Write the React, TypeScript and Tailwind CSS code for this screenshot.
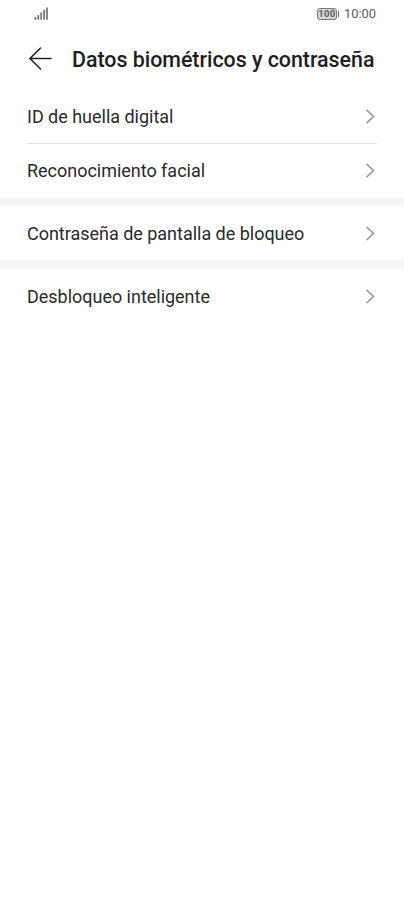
import { Fragment } from 'react';

const groups = [
  ['ID de huella digital', 'Reconocimiento facial'],
  ['Contraseña de pantalla de bloqueo'],
  ['Desbloqueo inteligente'],
];

function StatusBar() {
  return (
    <div className="flex h-7 items-center justify-between pr-7 pl-[34px]">
      {/* Signal */}
      <svg className="mb-px" width="14" height="13" viewBox="0 0 14 13" fill="#777">
        <rect x="0.5" y="10" width="1.8" height="2.7" />
        <rect x="3.4" y="8" width="1.8" height="4.7" />
        <rect x="6.3" y="5.5" width="1.8" height="7.2" />
        <rect x="9.2" y="3" width="1.8" height="9.7" />
        <rect x="12.1" y="0.5" width="1.8" height="12.2" />
      </svg>

      {/* Battery and clock */}
      <div className="flex items-center">
        <div className="flex h-3 w-5 items-center justify-center rounded-[3px] border border-[#777] bg-[#d6d6d6] text-[9.5px] leading-none font-bold tracking-[0.3px] text-[#606060]">
          100
        </div>
        <div className="ml-px h-1.5 w-px bg-[#6e6e6e]" />
        <span className="ml-[5px] text-[12.9px] leading-none text-[#5c5c5c]">10:00</span>
      </div>
    </div>
  );
}

function Row({ label }: { label: string }) {
  return (
    <button className="flex h-[54px] w-full items-center justify-between pr-[29px] pl-[27px] text-left">
      <span className="text-[18px] leading-6 tracking-[-0.02px] text-[#2a2a2a]">{label}</span>
      <svg className="mb-0.5" width="10" height="16" viewBox="0 0 10 16" fill="none" stroke="#9b9b9b" strokeWidth="1.6">
        <path d="M1.5 1.8 8.5 8.5l-7 6.7" />
      </svg>
    </button>
  );
}

export default function App() {
  return (
    <div className="min-h-screen w-full bg-white font-['Roboto',sans-serif]">
      <StatusBar />

      <header className="flex h-[62px] items-center pl-7">
        <svg className="mb-0.5" width="24" height="24" viewBox="0 0 24 24" fill="none" stroke="#222" strokeWidth="1.6" strokeLinecap="round">
          <path d="M12.5 2 2 12.5 12.5 23M2 12.5h21" />
        </svg>
        <h1 className="mt-px ml-5 text-[21.4px] leading-7 font-medium tracking-[-0.02px] whitespace-nowrap text-[#1e1e1e]">
          Datos biométricos y contraseña
        </h1>
      </header>

      <main>
        {groups.map((rows, i) => (
          <Fragment key={rows[0]}>
            {i > 0 && <div className="-mt-px mb-px h-[9px] bg-[#f6f6f6]" />}
            {rows.map((label, j) => (
              <Fragment key={label}>
                {j > 0 && <div className="-mt-px mr-[27px] ml-[27px] h-px bg-[#e2e2e2]" />}
                <Row label={label} />
              </Fragment>
            ))}
          </Fragment>
        ))}
      </main>
    </div>
  );
}
